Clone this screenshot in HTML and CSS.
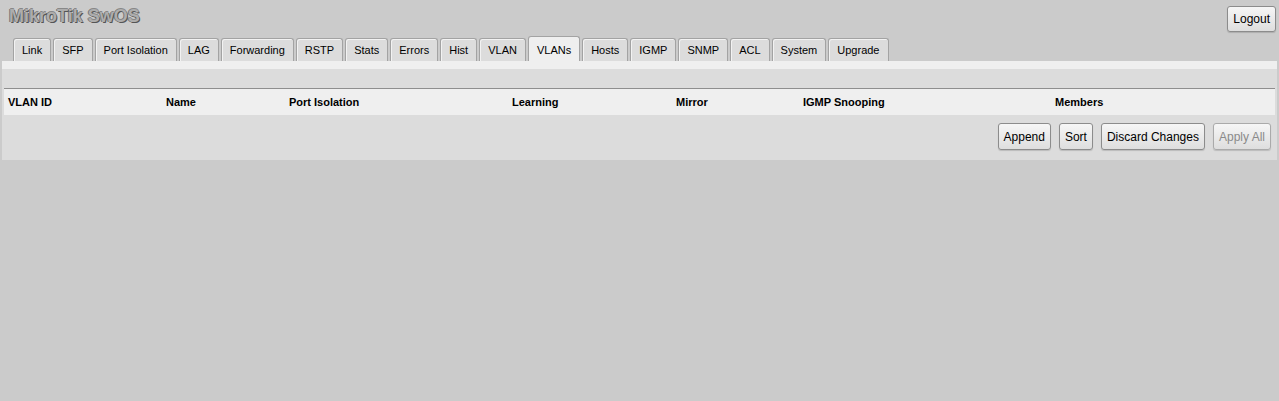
FILE: index.html
```html
<!DOCTYPE html>
<html lang="en">
<head>
    <meta charset="UTF-8">
    <meta name="viewport" content="width=device-width, initial-scale=1.0">
    <title>MikroTik SwOS</title>
    <link rel="stylesheet" href="styles.css">
</head>
<body>
    <div class="top">
        <div class="logo">MikroTik SwOS</div>
        <button class="btn logout">Logout</button>
    </div>

    <ul class="tabs">
        <li>Link</li>
        <li>SFP</li>
        <li>Port Isolation</li>
        <li>LAG</li>
        <li>Forwarding</li>
        <li>RSTP</li>
        <li>Stats</li>
        <li>Errors</li>
        <li>Hist</li>
        <li>VLAN</li>
        <li class="active">VLANs</li>
        <li>Hosts</li>
        <li>IGMP</li>
        <li>SNMP</li>
        <li>ACL</li>
        <li>System</li>
        <li>Upgrade</li>
    </ul>

    <div class="panel">
        <div class="strip"></div>
        <div class="spacer"></div>
        <table class="grid">
            <thead>
                <tr>
                    <th class="c-id">VLAN ID</th>
                    <th class="c-name">Name</th>
                    <th class="c-iso">Port Isolation</th>
                    <th class="c-learn">Learning</th>
                    <th class="c-mirror">Mirror</th>
                    <th class="c-igmp">IGMP Snooping</th>
                    <th>Members</th>
                </tr>
            </thead>
        </table>
        <div class="actions">
            <button class="btn">Append</button>
            <button class="btn">Sort</button>
            <button class="btn">Discard Changes</button>
            <button class="btn" disabled>Apply All</button>
        </div>
    </div>
</body>
</html>
```

FILE: styles.css
```css
body {
    font-family: "Liberation Sans", Arial, sans-serif;
    font-size: 12px;
    background-color: #cbcbcb;
    color: #000;
    margin: 0;
    padding: 0;
}
.top {
    display: flex;
    justify-content: space-between;
    align-items: flex-start;
    height: 36px;
    padding: 5px 3px 0 9px;
    box-sizing: border-box;
}
.logo {
    font-size: 18px;
    font-weight: bold;
    color: #adadad;
    text-shadow: 1px 1px 0 #555, -1px 0 0 #777, 0 -1px 0 #888;
    line-height: 22px;
}
.btn {
    font-family: "Liberation Sans", Arial, sans-serif;
    font-size: 12px;
    height: 27px;
    padding: 0 5px;
    color: #000;
    background: linear-gradient(#f6f6f6, #dedede);
    border: 1px solid #8c8c8c;
    border-radius: 3px;
    box-shadow: 0 1px 1px rgba(0, 0, 0, 0.15);
}
.btn:disabled {
    color: #8a8a8a;
    border-color: #aaa;
}
.logout {
    margin-top: 1px;
    height: 26px;
}
.tabs {
    list-style: none;
    display: flex;
    align-items: flex-end;
    gap: 2px;
    margin: 0;
    padding: 0 0 0 13px;
    height: 25px;
    font-size: 11px;
}
.tabs li {
    height: 23px;
    line-height: 22px;
    padding: 0 8px;
    box-sizing: border-box;
    background-color: #dcdcdc;
    border: 1px solid #a3a3a3;
    border-bottom: none;
    border-radius: 3px 3px 0 0;
    box-shadow: inset 1px 1px 0 #f2f2f2;
}
.tabs li.active {
    height: 25px;
    line-height: 26px;
    background-color: #efefef;
    box-shadow: none;
}
.panel {
    margin: 0 2px;
    background-color: #dcdcdc;
}
.strip {
    height: 8px;
    background-color: #efefef;
}
.spacer {
    height: 19px;
}
.grid {
    width: calc(100% - 4px);
    margin: 0 2px;
    border-collapse: collapse;
    border-top: 1px solid #8e8e8e;
    background-color: #efefef;
}
.grid th {
    text-align: left;
    font-size: 11px;
    font-weight: bold;
    height: 26px;
    padding: 0 4px;
}
.c-id { width: 150px; }
.c-name { width: 115px; }
.c-iso { width: 215px; }
.c-learn { width: 156px; }
.c-mirror { width: 119px; }
.c-igmp { width: 244px; }
.actions {
    display: flex;
    justify-content: flex-end;
    gap: 8px;
    padding: 8px 6px 10px 0;
}
```
